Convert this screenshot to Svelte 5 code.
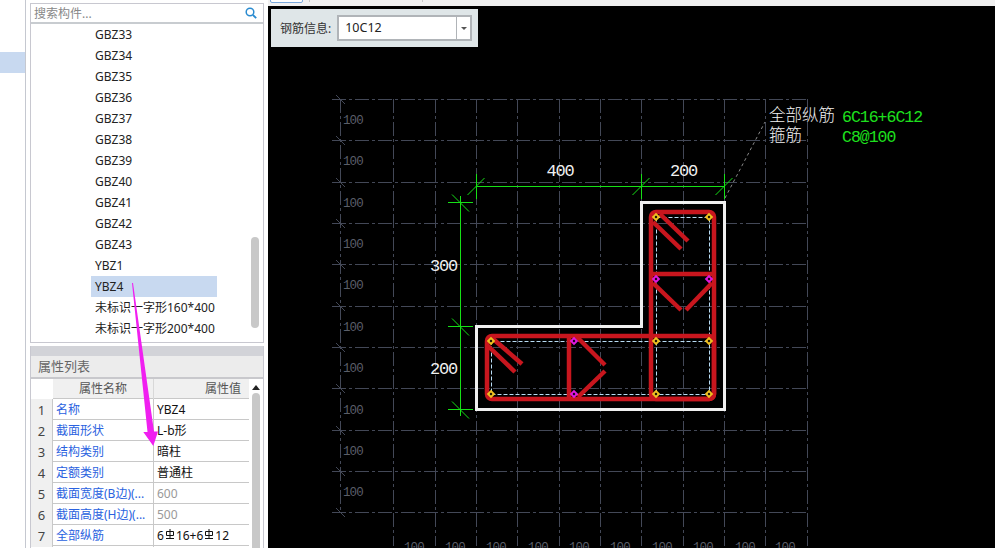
<script>
    const components = [
        "GBZ33", "GBZ34", "GBZ35", "GBZ36", "GBZ37", "GBZ38", "GBZ39", "GBZ40",
        "GBZ41", "GBZ42", "GBZ43", "YBZ1", "YBZ4",
        "未标识一字形160*400", "未标识一字形200*400",
    ];

    const props = [
        { name: "名称", value: "YBZ4" },
        { name: "截面形状", value: "L-b形" },
        { name: "结构类别", value: "暗柱" },
        { name: "定额类别", value: "普通柱" },
        { name: "截面宽度(B边)(...", value: "600", muted: true },
        { name: "截面高度(H边)(...", value: "500", muted: true },
        { name: "全部纵筋", rebar: true },
    ];

    const gridX = [340, 393, 435, 476, 517, 559, 600, 641, 683, 724, 765, 807];
    const gridY = [99, 140, 182, 223, 264, 306, 347, 388, 430, 471, 512];
    const leftLabels = [120, 161, 203, 244, 285, 327, 368, 410, 451, 492];
    const bottomLabels = [404, 445, 486, 528, 569, 610, 652, 693, 735, 775];

    const yellowDots = [
        [491, 341], [491, 394], [656, 341], [656, 394],
        [709, 341], [709, 394], [656, 217], [709, 217],
    ];
    const pinkDots = [[574, 341], [574, 394], [656, 279], [709, 279]];

    const dimTicksX = [476.5, 641.5, 724.5];
    const dimTicksY = [202.5, 326.5, 409.5];

    const redLines = [
        [660, 214, 688, 241], [653, 222, 681, 249],
        [653, 283, 681, 310], [712, 283, 686, 310],
        [492, 338, 522, 364], [487, 345, 515, 372],
        [577, 337, 605, 365], [578, 397, 605, 371],
    ];
</script>

<div class="page">
    <nav class="nav">
        <div class="nav-active"></div>
    </nav>

    <aside class="side">
        <section class="tree">
            <div class="search">
                <input placeholder="搜索构件..." />
                <svg width="12" height="12" viewBox="0 0 12 12">
                    <circle cx="5" cy="5" r="3.8" fill="none" stroke="#2a8bd0" stroke-width="1.5" />
                    <path d="M8 8l3.2 3.2" stroke="#2a8bd0" stroke-width="1.8" />
                </svg>
            </div>
            <ul class="list">
                {#each components as item}
                    <li><span class:selected={item === "YBZ4"}>{item}</span></li>
                {/each}
                <div class="list-scroll"></div>
            </ul>
        </section>

        <section class="props">
            <div class="props-band"></div>
            <div class="props-title">属性列表</div>
            <div class="props-body">
                <div class="table">
                    <div class="row head">
                        <div class="idx"></div>
                        <div class="name">属性名称</div>
                        <div class="value">属性值</div>
                    </div>
                    {#each props as prop, i}
                        <div class="row">
                            <div class="idx">{i + 1}</div>
                            <div class="name">{prop.name}</div>
                            <div class="value" class:muted={prop.muted}>
                                {#if prop.rebar}
                                    6<svg class="rebar" width="10" height="10" viewBox="0 0 10 10"><path d="M1 9.5h8M5 0v9.5M1.5 2.5h7v4h-7z" fill="none" stroke="#111" /></svg>16+6<svg class="rebar" width="10" height="10" viewBox="0 0 10 10"><path d="M1 9.5h8M5 0v9.5M1.5 2.5h7v4h-7z" fill="none" stroke="#111" /></svg>12
                                {:else}
                                    {prop.value}
                                {/if}
                            </div>
                        </div>
                    {/each}
                </div>
                <div class="props-scroll">
                    <div class="up"></div>
                    <div class="thumb"></div>
                </div>
            </div>
        </section>
    </aside>

    <main class="main">
        <div class="tabs">
            <div class="tab"></div>
            <div class="tab-sep one"></div>
            <div class="tab-sep two"></div>
        </div>
        <div class="canvas">
            <div class="toolbar">
                <span class="tool-label">钢筋信息:</span>
                <div class="combo">
                    <span class="combo-text">10C12</span>
                    <span class="combo-btn"><i></i></span>
                </div>
            </div>

            <svg class="drawing" viewBox="268 6 727 542" width="727" height="542">
                <g class="grid">
                    {#each gridX as x, i}
                        <line x1={x + 0.5} y1="99" x2={x + 0.5} y2={i === 0 ? 513 : 546} />
                    {/each}
                    {#each gridY as y}
                        <line x1="332" y1={y + 0.5} x2="807" y2={y + 0.5} />
                    {/each}
                    {#each gridY as y}
                        <line class="tick" x1="336" y1={y - 4} x2="345" y2={y + 5} />
                    {/each}
                </g>
                {#each leftLabels as y}
                    <text class="grid-label" x="343" y={y + 4}>100</text>
                {/each}
                {#each bottomLabels as x}
                    <text class="grid-label" {x} y="551">100</text>
                {/each}

                <line class="leader" x1="725" y1="198" x2="765" y2="122" />

                <g class="dim">
                    <line x1="476" y1="186.5" x2="725" y2="186.5" />
                    {#each dimTicksX as x}
                        <line x1={x} y1="174" x2={x} y2="199" />
                        <line x1={x - 9} y1="195" x2={x + 8} y2="178" />
                    {/each}
                    <line x1="460.5" y1="196" x2="460.5" y2="416" />
                    {#each dimTicksY as y}
                        <line x1="448" y1={y} x2="473" y2={y} />
                        <line x1="452" y1={y - 8} x2="469" y2={y + 9} />
                    {/each}
                </g>
                <text class="dim-text" x="560" y="176" text-anchor="middle">400</text>
                <text class="dim-text" x="683.5" y="176" text-anchor="middle">200</text>
                <text class="dim-text" x="443.5" y="271" text-anchor="middle">300</text>
                <text class="dim-text" x="443.5" y="374" text-anchor="middle">200</text>

                <text class="note" x="769" y="121">全部纵筋</text>
                <text class="note" x="769" y="141">箍筋</text>
                <text class="note-value" x="842" y="122">6C16+6C12</text>
                <text class="note-value" x="842" y="142">C8@100</text>

                <path class="outline" d="M641.5 202.5H724.5V409.5H476.5V326.5H641.5Z" />
                <path class="inner" d="M656.5 217.5H709.5V394.5H491.5V341.5H656.5ZM656.5 341.5V394.5M656.5 341.5H709.5" />

                <g class="red">
                    <rect x="487" y="336" width="227" height="63" rx="5" />
                    <rect x="651" y="212" width="63" height="187" rx="5" />
                    <line x1="651" y1="274" x2="714" y2="274" />
                    <line x1="569" y1="336" x2="569" y2="399" />
                    {#each redLines as l}
                        <line x1={l[0]} y1={l[1]} x2={l[2]} y2={l[3]} />
                    {/each}
                </g>

                {#each yellowDots as d}
                    <rect class="dot" x={d[0] - 2} y={d[1] - 2} width="4" height="4" transform="rotate(45 {d[0]} {d[1]})" />
                {/each}
                {#each pinkDots as d}
                    <rect class="dot pink" x={d[0] - 2} y={d[1] - 2} width="4" height="4" transform="rotate(45 {d[0]} {d[1]})" />
                {/each}
            </svg>
        </div>
    </main>

    <svg class="arrow" width="995" height="548" viewBox="0 0 995 548">
        <polygon points="132,283 133,283 154,431.5 158,431.5 153.3,446 143.3,432 147.5,432" fill="#f01ff0" />
    </svg>
</div>

<style>
    :global(body) {
        margin: 0;
        background: #fff;
    }

    .page {
        position: relative;
        display: flex;
        width: 995px;
        height: 548px;
        overflow: hidden;
        font-family: "Noto Sans", "Noto Sans CJK SC", sans-serif;
        font-size: 12px;
        color: #222;
        background: #fff;
    }

    .nav {
        width: 25px;
        flex: none;
        border-right: 1px solid #c5c8d0;
    }

    .nav-active {
        height: 21px;
        margin-top: 52px;
        background: #c8d9f0;
    }

    .side {
        width: 234px;
        flex: none;
        padding: 0 4px 0 4px;
        display: flex;
        flex-direction: column;
        background: #fff;
    }

    .tree {
        height: 338px;
        flex: none;
        margin-top: 3px;
        border: 1px solid #c8c8d0;
    }

    .search {
        display: flex;
        align-items: center;
        height: 18px;
        padding: 0 6px 0 3px;
        border-bottom: 2px solid #c8ccd0;
    }

    .search input {
        flex: 1;
        min-width: 0;
        border: 0;
        outline: 0;
        padding: 0;
        font: inherit;
    }

    .search input::placeholder {
        color: #888;
        opacity: 1;
    }

    .list {
        position: relative;
        list-style: none;
        margin: 0;
        padding: 0 0 0 60px;
    }

    .list li {
        height: 21px;
        line-height: 21px;
    }

    .list span {
        display: block;
        width: 122px;
        padding-left: 4px;
        white-space: nowrap;
    }

    .list .selected {
        background: #c8d9f0;
    }

    .list-scroll {
        position: absolute;
        right: 4px;
        top: 213px;
        width: 8px;
        height: 91px;
        border-radius: 4px;
        background: #c8c8c8;
    }

    .props {
        flex: 1;
        margin-top: 3px;
        border-right: 1px solid #c8c8d0;
        border-left: 1px solid #c8c8d0;
    }

    .props-band {
        height: 10px;
        background: #d2d3d8;
    }

    .props-title {
        height: 21px;
        line-height: 21px;
        padding-left: 7px;
        font-size: 13px;
        color: #666;
        background: #ececec;
        border-bottom: 2px solid #c8c8cc;
    }

    .props-body {
        display: flex;
    }

    .table {
        width: 218px;
        flex: none;
    }

    .row {
        display: grid;
        grid-template-columns: 22px 101px 95px;
        height: 21px;
        line-height: 22px;
        border-bottom: 1px solid #c8c8c8;
        box-sizing: border-box;
    }

    .row .idx {
        text-align: center;
        font-size: 13px;
        background: #f0f0f0;
        border-right: 1px solid #c8c8c8;
        color: #444;
    }

    .row .name {
        padding-left: 3px;
        color: #2a62e0;
        white-space: nowrap;
        overflow: hidden;
        border-right: 1px solid #c8c8c8;
    }

    .row .value {
        padding-left: 3px;
        color: #111;
        white-space: nowrap;
    }

    .row .muted {
        color: #999;
    }

    .row.head {
        height: 20px;
        line-height: 20px;
        background: #f0f0f0;
    }

    .row.head .idx {
        background: #fff;
        border-right: 0;
    }

    .row.head .name {
        padding-left: 26px;
        color: #555;
        border-right: 1px solid #d8d8d8;
    }

    .row.head .value {
        padding-left: 51px;
        color: #555;
    }

    .rebar {
        margin: 0 1px;
        vertical-align: 1px;
    }

    .props-scroll {
        width: 8px;
        margin-left: 3px;
    }

    .up {
        width: 0;
        margin: 6px 0 3px;
        border: 4px solid transparent;
        border-top: 0;
        border-bottom: 5px solid #222;
    }

    .thumb {
        height: 180px;
        border-radius: 4px 4px 0 0;
        background: #c8c8c8;
    }

    .main {
        position: relative;
        flex: 1;
        display: flex;
        flex-direction: column;
        min-width: 0;
    }

    .tabs {
        position: relative;
        height: 6px;
        flex: none;
        background: #f0f0f0;
    }

    .tab {
        position: absolute;
        left: 2px;
        top: -2px;
        width: 31px;
        height: 3px;
        border: 1px solid #7aa8dc;
        border-radius: 2px;
        background: #fff;
    }

    .tab-sep {
        position: absolute;
        top: 0;
        width: 1px;
        height: 2px;
        background: #c8c8c8;
    }

    .tab-sep.one {
        left: 41px;
    }

    .tab-sep.two {
        left: 154px;
    }

    .canvas {
        position: relative;
        flex: 1;
        background: #000;
        overflow: hidden;
    }

    .toolbar {
        position: absolute;
        z-index: 1;
        left: 3px;
        top: 3px;
        display: flex;
        align-items: center;
        gap: 6px;
        width: 198px;
        height: 38px;
        padding-left: 9px;
        background: #dfe6e8;
    }

    .tool-label {
        color: #333;
    }

    .combo {
        display: flex;
        width: 131px;
        height: 22px;
        border: 2px solid #b0b4b8;
        background: #fff;
    }

    .combo-text {
        flex: 1;
        padding-left: 6px;
        line-height: 22px;
        font-size: 12.5px;
    }

    .combo-btn {
        display: flex;
        align-items: center;
        justify-content: center;
        width: 13px;
        border-left: 1px solid #b0b4b8;
    }

    .combo-btn i {
        border: 3px solid transparent;
        border-top: 3px solid #555;
        border-bottom: 0;
    }

    .drawing {
        display: block;
    }

    .grid line {
        stroke: #434857;
        stroke-width: 1;
        stroke-dasharray: 14 3 3 3;
        shape-rendering: crispEdges;
    }

    .grid .tick {
        stroke-dasharray: none;
        shape-rendering: auto;
    }

    .grid-label {
        fill: #5a5e69;
        font-family: "Liberation Mono", monospace;
        font-size: 12.5px;
        letter-spacing: -0.9px;
    }

    .leader {
        stroke: #888;
        stroke-dasharray: 3 3;
    }

    .dim line {
        stroke: #16e016;
        stroke-width: 1;
    }

    .dim-text {
        fill: #f0f0f0;
        font-family: "Liberation Mono", monospace;
        font-size: 17px;
        letter-spacing: -1.2px;
    }

    .note {
        fill: #f0f0f0;
        font-family: "Noto Sans CJK SC", sans-serif;
        font-weight: 300;
        font-size: 16.5px;
    }

    .note-value {
        fill: #1ee01e;
        font-family: "Liberation Mono", monospace;
        font-size: 16.5px;
        letter-spacing: -1px;
    }

    .outline {
        fill: none;
        stroke: #f0f0f0;
        stroke-width: 3;
    }

    .inner {
        fill: none;
        stroke: #b8dcf4;
        stroke-width: 1;
        stroke-dasharray: 4 2;
    }

    .red rect,
    .red line {
        fill: none;
        stroke: #c8161e;
        stroke-width: 4.5;
    }

    .dot {
        fill: #000;
        stroke: #f0c020;
        stroke-width: 2;
    }

    .dot.pink {
        stroke: #e018e0;
    }

    .arrow {
        position: absolute;
        left: 0;
        top: 0;
        pointer-events: none;
    }
</style>
